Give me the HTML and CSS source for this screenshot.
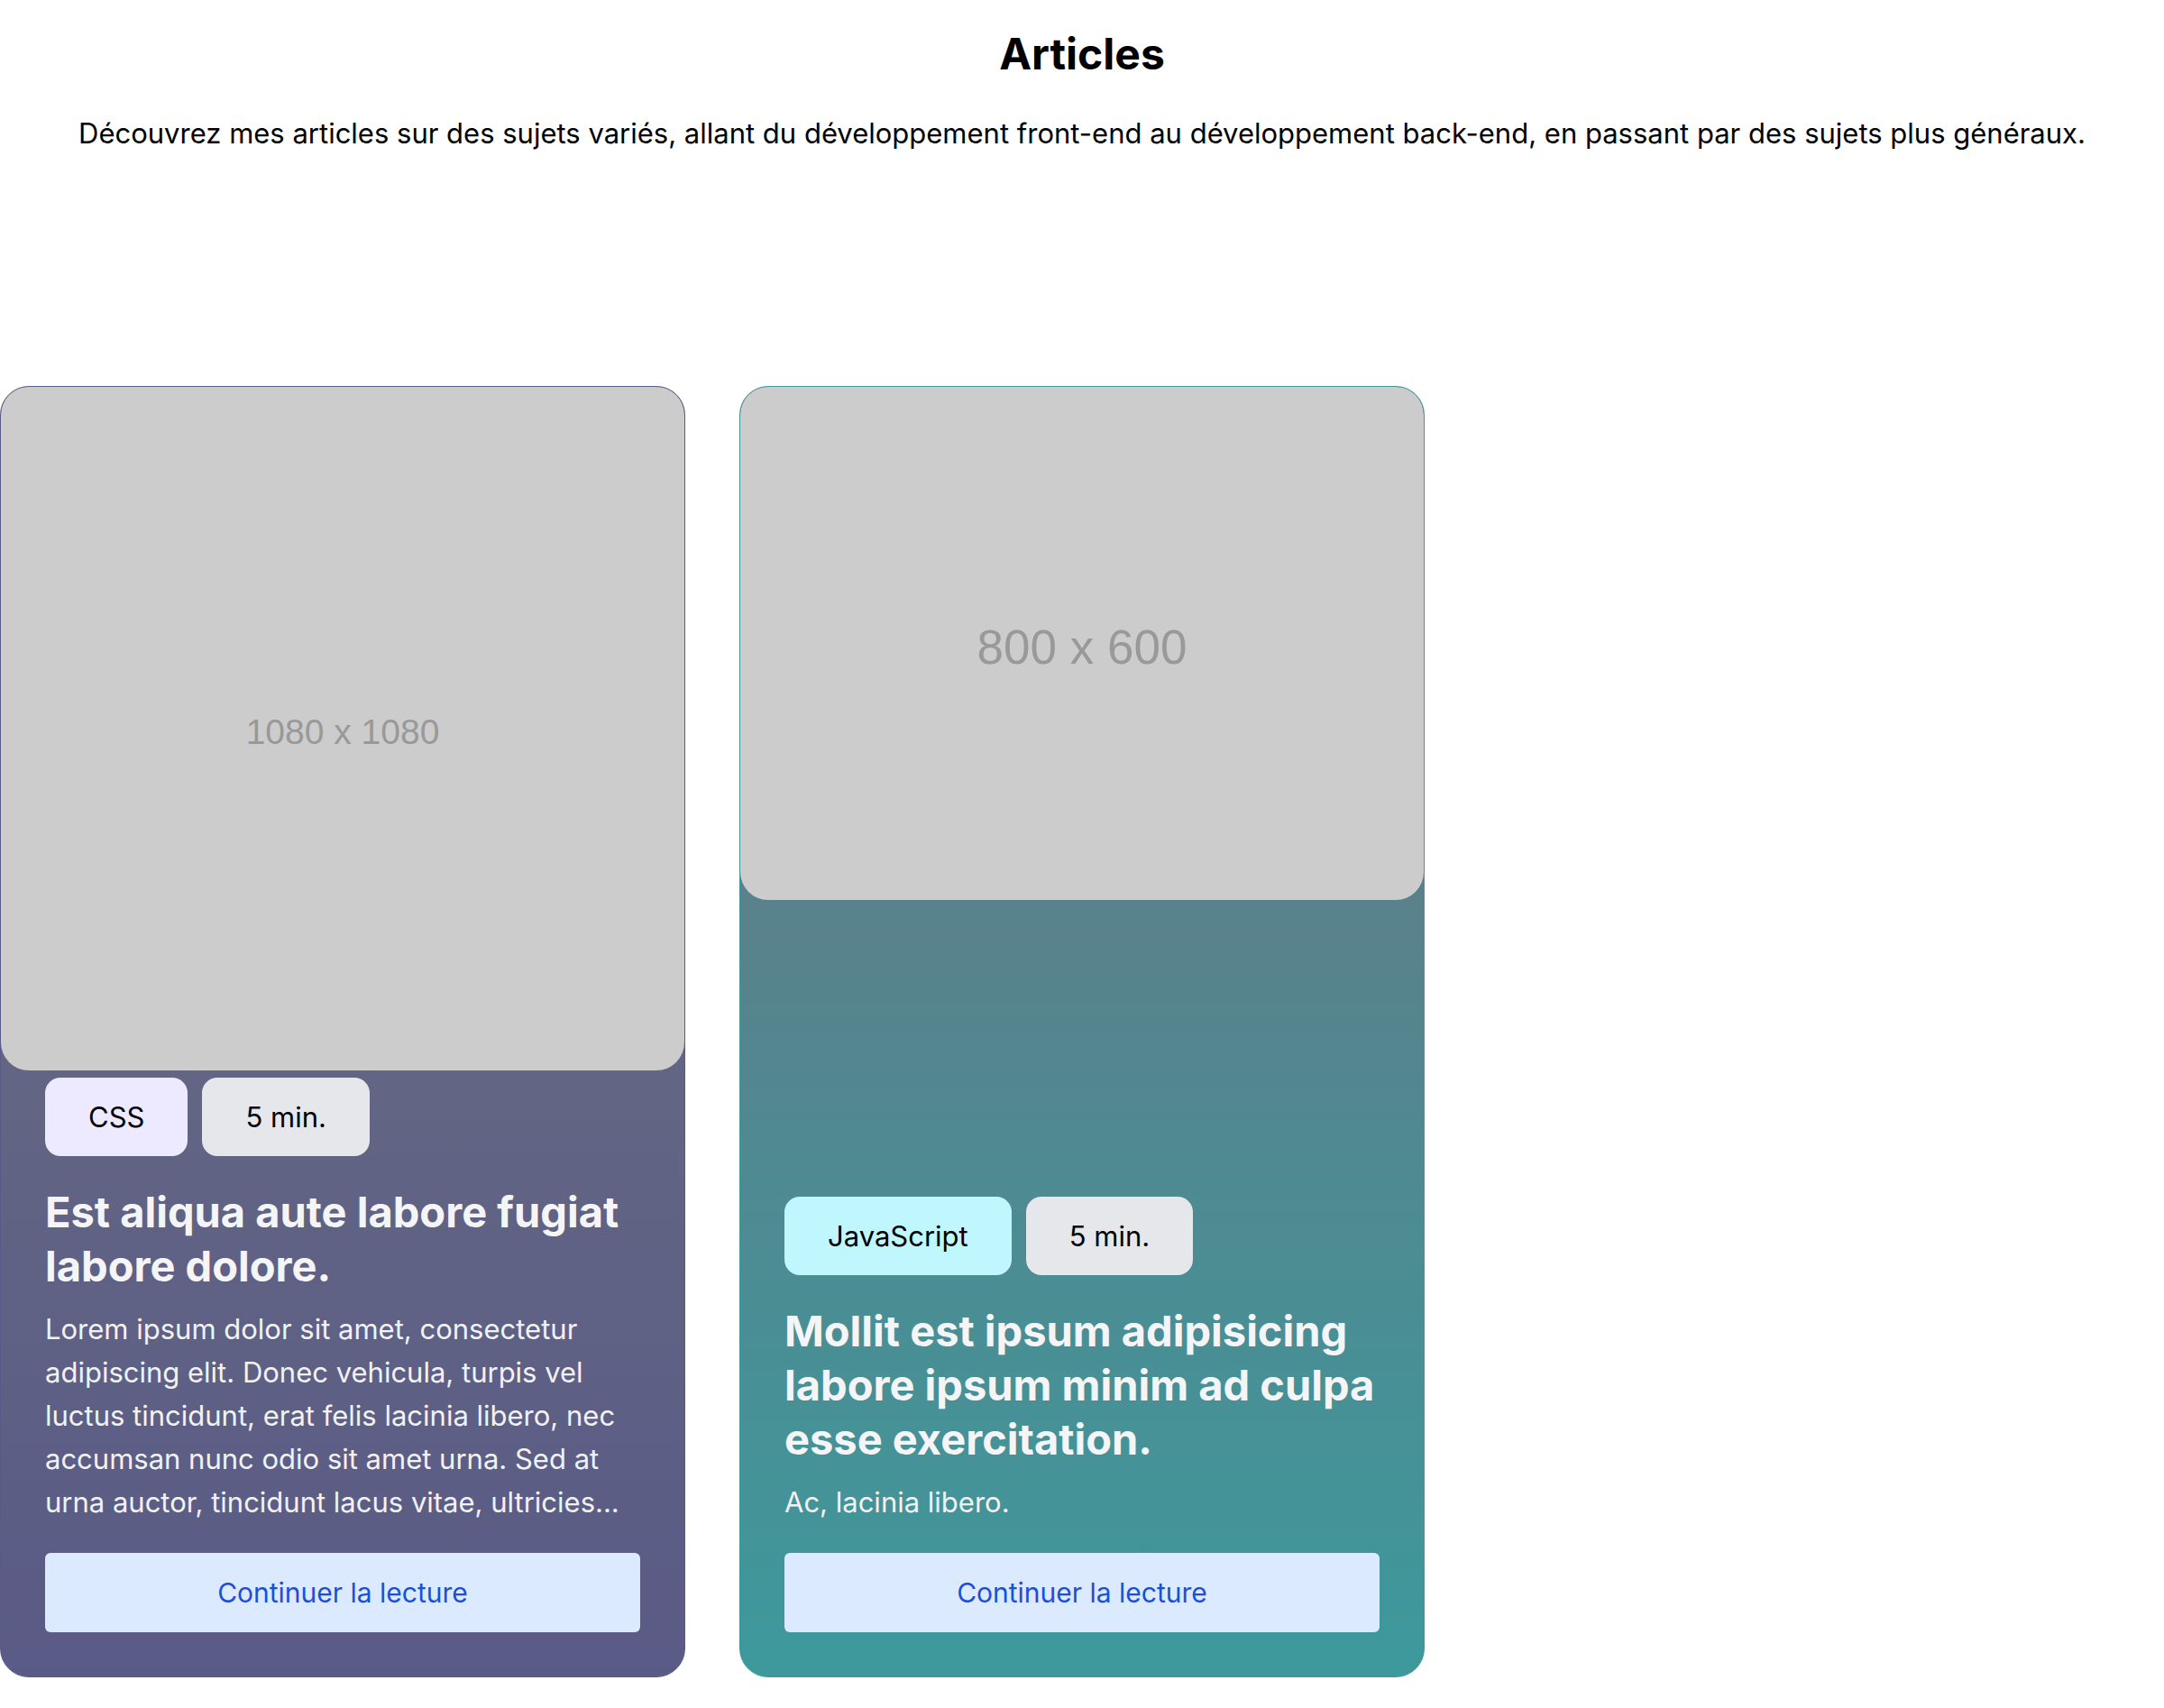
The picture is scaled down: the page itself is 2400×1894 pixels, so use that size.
FILE: index.html
```html
<!DOCTYPE html>
<html lang="fr">
<head>
<meta charset="utf-8">
<title>Articles</title>
<link rel="stylesheet" href="styles.css">
</head>
<body>
<header class="intro">
  <h1 class="intro-title">Articles</h1>
  <p class="intro-text">Découvrez mes articles sur des sujets variés, allant du développement front-end au développement back-end, en passant par des sujets plus généraux.</p>
</header>
<main class="grid">
  <article class="card card-css">
    <div class="thumb thumb-square"><span class="thumb-label thumb-label-sm">1080 x 1080</span></div>
    <div class="content">
      <div class="tags">
        <span class="tag tag-css">CSS</span>
        <span class="tag tag-time">5 min.</span>
      </div>
      <h2 class="card-title">Est aliqua aute labore fugiat labore dolore.</h2>
      <p class="card-text">Lorem ipsum dolor sit amet, consectetur adipiscing elit. Donec vehicula, turpis vel luctus tincidunt, erat felis lacinia libero, nec accumsan nunc odio sit amet urna. Sed at urna auctor, tincidunt lacus vitae, ultricies...</p>
      <a class="btn" href="#">Continuer la lecture</a>
    </div>
  </article>
  <article class="card card-js">
    <div class="thumb thumb-wide"><span class="thumb-label thumb-label-lg">800 x 600</span></div>
    <div class="content">
      <div class="tags">
        <span class="tag tag-js">JavaScript</span>
        <span class="tag tag-time">5 min.</span>
      </div>
      <h2 class="card-title">Mollit est ipsum adipisicing labore ipsum minim ad culpa esse exercitation.</h2>
      <p class="card-text">Ac, lacinia libero.</p>
      <a class="btn" href="#">Continuer la lecture</a>
    </div>
  </article>
</main>
</body>
</html>
```

FILE: styles.css
```css
* { box-sizing: border-box; }

html, body {
  margin: 0;
  padding: 0;
  background: #ffffff;
}

body {
  font-family: Inter, "Noto Sans", sans-serif;
  color: #000000;
}

.intro {
  display: flex;
  flex-direction: column;
  align-items: center;
  padding-top: 30px;
}

.intro-title {
  margin: 0;
  font-size: 48px;
  line-height: 60px;
  font-weight: 700;
}

.intro-text {
  margin: 37px 0 0;
  font-size: 31px;
  line-height: 42px;
  text-align: center;
}

.grid {
  display: grid;
  grid-template-columns: repeat(3, 1fr);
  column-gap: 60px;
  margin-top: 259px;
}

.card {
  display: flex;
  flex-direction: column;
  border: 1px solid;
  border-radius: 32px;
  overflow: hidden;
}

.card-css {
  border-color: #5a5a86;
  background: linear-gradient(to bottom, #6b7280, #5a5a86);
}

.card-js {
  border-color: #3d999c;
  background: linear-gradient(to bottom, #6b7280, #3d999c);
}

.thumb {
  display: flex;
  align-items: center;
  justify-content: center;
  width: 100%;
  background: #cccccc;
  border-radius: 31px;
}

.thumb-square { aspect-ratio: 1 / 1; }
.thumb-wide { aspect-ratio: 4 / 3; }

.thumb-label {
  font-family: "Liberation Sans", Arial, sans-serif;
  color: #999999;
  margin-top: 8px;
}

.thumb-label-sm { font-size: 39px; }
.thumb-label-lg { font-size: 53px; }

.content {
  flex: 1;
  display: flex;
  flex-direction: column;
  justify-content: flex-end;
  padding: 0 49px 49px;
  margin-top: 8px;
}

.tags {
  display: flex;
  gap: 16px;
}

.tag {
  font-size: 31px;
  line-height: 42px;
  padding: 22.5px 48px;
  border-radius: 17px;
  color: #000000;
}

.tag-css { background: #ede9fe; }
.tag-js { background: #c0f6fe; }
.tag-time { background: #e5e7eb; }

.card-title {
  margin: 32px 0 0;
  font-size: 47px;
  line-height: 60px;
  font-weight: 700;
  color: #f5f5f7;
}

.card-text {
  margin: 16px 0 0;
  font-size: 31px;
  line-height: 48px;
  color: #f1f2f5;
  display: -webkit-box;
  -webkit-box-orient: vertical;
  -webkit-line-clamp: 5;
  overflow: hidden;
}

.btn {
  margin-top: 32px;
  display: block;
  height: 88px;
  line-height: 88px;
  text-align: center;
  background: #dbeafe;
  color: #1d4ed8;
  font-size: 30px;
  border-radius: 6px;
  text-decoration: none;
}
```
